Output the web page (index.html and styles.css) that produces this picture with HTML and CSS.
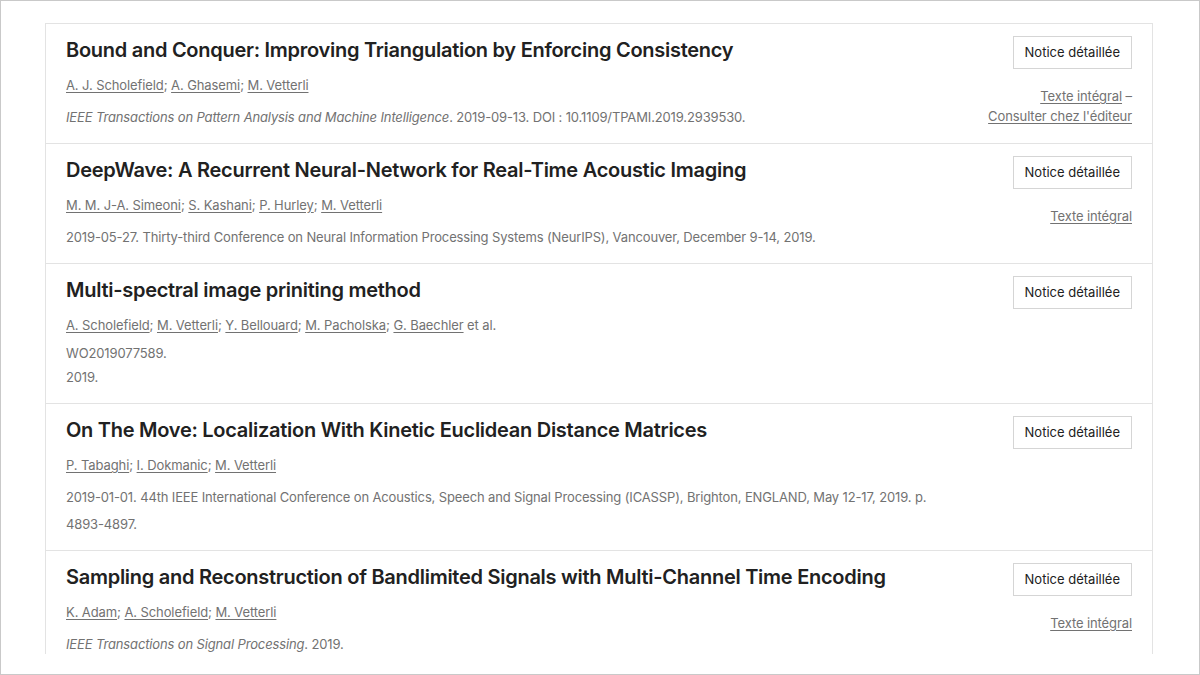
FILE: index.html
```html
<!DOCTYPE html>
<html lang="fr">
<head>
<meta charset="utf-8">
<link rel="stylesheet" href="styles.css">
</head>
<body>
<div class="frame">
  <div class="clip">
    <ul class="list">
      <li class="item">
        <div class="main">
          <h3 class="title">Bound and Conquer: Improving Triangulation by Enforcing Consistency</h3>
          <p class="authors"><a href="#">A. J. Scholefield</a>; <a href="#">A. Ghasemi</a>; <a href="#">M. Vetterli</a></p>
          <p class="meta"><em>IEEE Transactions on Pattern Analysis and Machine Intelligence</em>. 2019-09-13. DOI : 10.1109/TPAMI.2019.2939530.</p>
        </div>
        <div class="side">
          <a class="btn" href="#">Notice détaillée</a>
          <p class="links"><a href="#">Texte intégral</a> –<br><a href="#">Consulter chez l'éditeur</a></p>
        </div>
      </li>
      <li class="item">
        <div class="main">
          <h3 class="title">DeepWave: A Recurrent Neural-Network for Real-Time Acoustic Imaging</h3>
          <p class="authors"><a href="#">M. M. J-A. Simeoni</a>; <a href="#">S. Kashani</a>; <a href="#">P. Hurley</a>; <a href="#">M. Vetterli</a></p>
          <p class="meta">2019-05-27. Thirty-third Conference on Neural Information Processing Systems (NeurIPS), Vancouver, December 9-14, 2019.</p>
        </div>
        <div class="side">
          <a class="btn" href="#">Notice détaillée</a>
          <p class="links"><a href="#">Texte intégral</a></p>
        </div>
      </li>
      <li class="item">
        <div class="main">
          <h3 class="title">Multi-spectral image priniting method</h3>
          <p class="authors"><a href="#">A. Scholefield</a>; <a href="#">M. Vetterli</a>; <a href="#">Y. Bellouard</a>; <a href="#">M. Pacholska</a>; <a href="#">G. Baechler</a> et al.</p>
          <p class="meta near">WO2019077589.</p>
          <p class="meta tight">2019.</p>
        </div>
        <div class="side">
          <a class="btn" href="#">Notice détaillée</a>
        </div>
      </li>
      <li class="item">
        <div class="main">
          <h3 class="title">On The Move: Localization With Kinetic Euclidean Distance Matrices</h3>
          <p class="authors"><a href="#">P. Tabaghi</a>; <a href="#">I. Dokmanic</a>; <a href="#">M. Vetterli</a></p>
          <p class="meta">2019-01-01. 44th IEEE International Conference on Acoustics, Speech and Signal Processing (ICASSP), Brighton, ENGLAND, May 12-17, 2019. p. 4893-4897.</p>
        </div>
        <div class="side">
          <a class="btn" href="#">Notice détaillée</a>
        </div>
      </li>
      <li class="item">
        <div class="main">
          <h3 class="title">Sampling and Reconstruction of Bandlimited Signals with Multi-Channel Time Encoding</h3>
          <p class="authors"><a href="#">K. Adam</a>; <a href="#">A. Scholefield</a>; <a href="#">M. Vetterli</a></p>
          <p class="meta"><em>IEEE Transactions on Signal Processing</em>. 2019.</p>
        </div>
        <div class="side">
          <a class="btn" href="#">Notice détaillée</a>
          <p class="links"><a href="#">Texte intégral</a></p>
        </div>
      </li>
    </ul>
  </div>
</div>
</body>
</html>
```
FILE: styles.css
```css
* { box-sizing: border-box; }
html, body { margin: 0; padding: 0; background: #fff; }
body {
  font-family: Inter, "Liberation Sans", sans-serif;
  color: #727272;
}
.frame {
  width: 1200px;
  height: 675px;
  border: 1px solid #c9c9c9;
  padding: 22px 46px 0 44px;
  overflow: hidden;
}
.clip {
  height: 631px;
  overflow: hidden;
}
.list {
  list-style: none;
  margin: 0;
  padding: 0;
  border: 1px solid #e3e3e3;
  border-bottom: none;
}
.item {
  display: flex;
  justify-content: space-between;
  padding: 12px 20px 12px 20px;
  border-top: 1px solid #e3e3e3;
}
.item:first-child { border-top: none; }
.main { flex: 1; min-width: 0; padding-right: 60px; }
.title {
  margin: 0;
  font-size: 20px;
  line-height: 28px;
  font-weight: 600;
  color: #212121;
  letter-spacing: -0.27px;
}
.authors {
  margin: 11px 0 0;
  font-size: 13px;
  line-height: 20px;
  letter-spacing: -0.1px;
}
.meta {
  margin: 9px 0 0;
  font-size: 13px;
  line-height: 27px;
  letter-spacing: -0.14px;
}
.meta.near { margin-top: 5px; }
.meta.tight { margin-top: -3px; }
a { color: #727272; text-decoration: underline; text-underline-offset: 2px; }
.side {
  display: flex;
  flex-direction: column;
  align-items: flex-end;
  flex-shrink: 0;
}
.btn {
  display: block;
  height: 33px;
  padding: 0 11px;
  border: 1px solid #d5d5d5;
  font-size: 13px;
  line-height: 31px;
  color: #212121;
  text-decoration: none;
}
.links {
  margin: 17px 0 0;
  text-align: right;
  font-size: 13px;
  line-height: 20px;
  letter-spacing: -0.1px;
}
```
